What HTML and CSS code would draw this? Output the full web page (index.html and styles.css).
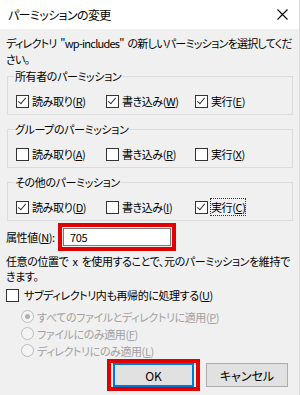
FILE: index.html
```html
<!DOCTYPE html>
<html lang="ja">
<head>
  <meta charset="UTF-8">
  <meta name="viewport" content="width=device-width, initial-scale=1.0">
  <title>パーミッションの変更</title>
  <link rel="stylesheet" href="styles.css">
</head>
<body>
  <div class="dialog">
    <header class="titlebar">
      <span class="title">パーミッションの変更</span>
      <svg class="close" width="11" height="11" viewBox="0 0 11 11">
        <path d="M0.5 0.5 L10.5 10.5 M10.5 0.5 L0.5 10.5" stroke="#000" stroke-width="1.1" fill="none"/>
      </svg>
    </header>

    <main class="content">
      <p class="intro">ディレクトリ "wp-includes" の新しいパーミッションを選択してください。</p>

      <fieldset class="group">
        <legend>所有者のパーミッション</legend>
        <div class="row">
          <label class="opt"><span class="cb on"></span>読み取り(<u>R</u>)</label>
          <label class="opt"><span class="cb on"></span>書き込み(<u>W</u>)</label>
          <label class="opt"><span class="cb on"></span>実行(<u>E</u>)</label>
        </div>
      </fieldset>

      <fieldset class="group">
        <legend>グループのパーミッション</legend>
        <div class="row">
          <label class="opt"><span class="cb"></span>読み取り(<u>A</u>)</label>
          <label class="opt"><span class="cb"></span>書き込み(<u>R</u>)</label>
          <label class="opt"><span class="cb"></span>実行(<u>X</u>)</label>
        </div>
      </fieldset>

      <fieldset class="group">
        <legend>その他のパーミッション</legend>
        <div class="row">
          <label class="opt"><span class="cb on"></span>読み取り(<u>D</u>)</label>
          <label class="opt"><span class="cb"></span>書き込み(<u>I</u>)</label>
          <label class="opt"><span class="cb on"></span><span class="focus">実行(<u>C</u>)</span></label>
        </div>
      </fieldset>

      <div class="attr">
        <span class="attr-label">属性値(<u>N</u>):</span>
        <div class="mark">
          <div class="field">705</div>
        </div>
      </div>

      <p class="hint">任意の位置で x を使用することで、元のパーミッションを維持できます。</p>

      <label class="opt recursive"><span class="cb"></span>サブディレクトリ内も再帰的に処理する(<u>U</u>)</label>

      <div class="radios">
        <label class="radio"><span class="rb on"></span>すべてのファイルとディレクトリに適用(<u>P</u>)</label>
        <label class="radio"><span class="rb"></span>ファイルにのみ適用(<u>F</u>)</label>
        <label class="radio"><span class="rb"></span>ディレクトリにのみ適用(<u>L</u>)</label>
      </div>

      <div class="buttons">
        <div class="mark btn-mark"><button class="btn default">OK</button></div>
        <button class="btn">キャンセル</button>
      </div>
    </main>
  </div>
</body>
</html>
```

FILE: styles.css
```css
body {
  margin: 0;
  font-family: "Noto Sans CJK JP", "Noto Sans", sans-serif;
  font-size: 11px;
  letter-spacing: -0.4px;
  word-spacing: 2px;
  font-feature-settings: "palt";
  color: #000;
  background: #f0f0f0;
}
.dialog {
  width: 300px;
  height: 395px;
  box-sizing: border-box;
  border-right: 1px solid #dadada;
  overflow: hidden;
}
.titlebar {
  height: 29px;
  background: #fff;
  display: flex;
  align-items: center;
  justify-content: space-between;
  padding: 0 11px 0 8px;
}
.title {
  line-height: 16px;
  font-size: 12px;
  letter-spacing: -0.6px;
}
.content {
  padding: 6px 4px 0 6px;
}
.intro {
  margin: 0 -4px 0 0;
  line-height: 16px;
  letter-spacing: -0.75px;
}
.group {
  margin: 1px 2px 0 1px;
  padding: 0 8px 3px;
  border: 1px solid #dcdcdc;
  min-width: 0;
}
.group + .group {
  margin-top: 6px;
}
.group legend {
  padding: 0 1px;
  margin-left: -2px;
  line-height: 16px;
}
.row {
  display: grid;
  grid-template-columns: 90px 89px 1fr;
  height: 20px;
  align-items: center;
  margin-top: 7px;
}
.opt {
  display: flex;
  align-items: center;
  line-height: 16px;
  white-space: nowrap;
}
.cb {
  width: 11px;
  height: 11px;
  border: 1px solid #333;
  background: #fff;
  margin-right: 3px;
  flex: none;
  position: relative;
}
.cb.on::after {
  content: "";
  position: absolute;
  left: 3px;
  top: 0;
  width: 3px;
  height: 7px;
  border: solid #333;
  border-width: 0 1px 1px 0;
  transform: rotate(40deg);
}
.focus {
  outline: 1px dotted #333;
  outline-offset: 0;
}
.attr {
  display: flex;
  align-items: center;
  margin-top: 2px;
}
.attr-label {
  width: 52px;
  white-space: nowrap;
}
.mark {
  border: 4px solid #e00000;
  padding: 1px;
}
.field {
  width: 100px;
  height: 16px;
  background: #fff;
  border: 1px solid #7a7a7a;
  padding-left: 6px;
  line-height: 16px;
}
.hint {
  width: 288px;
  margin: 3px 0 0;
  line-height: 15px;
}
.recursive {
  margin-top: 1px;
  height: 20px;
}
.recursive .cb {
  margin-right: 5px;
}
.radios {
  padding-left: 15px;
  margin-top: 3px;
  color: #a0a0a0;
}
.radio {
  display: flex;
  align-items: center;
  height: 17px;
  white-space: nowrap;
}
.rb {
  width: 11px;
  height: 11px;
  border: 1px solid #bcbcbc;
  border-radius: 50%;
  background: #f4f4f4;
  margin-right: 3px;
  position: relative;
  flex: none;
}
.rb.on::after {
  content: "";
  position: absolute;
  left: 3px;
  top: 3px;
  width: 5px;
  height: 5px;
  border-radius: 50%;
  background: #b0b0b0;
}
.buttons {
  display: flex;
  justify-content: flex-end;
  align-items: center;
  gap: 6px;
  margin-right: 7px;
}
.btn-mark {
  padding: 0 2px;
}
.btn {
  width: 82px;
  height: 24px;
  font: inherit;
  font-size: 12px;
  background: #e1e1e1;
  border: 1px solid #adadad;
  padding: 0;
  color: #000;
}
.btn.default {
  border: 2px solid #0078d7;
  width: 81px;
}
```
